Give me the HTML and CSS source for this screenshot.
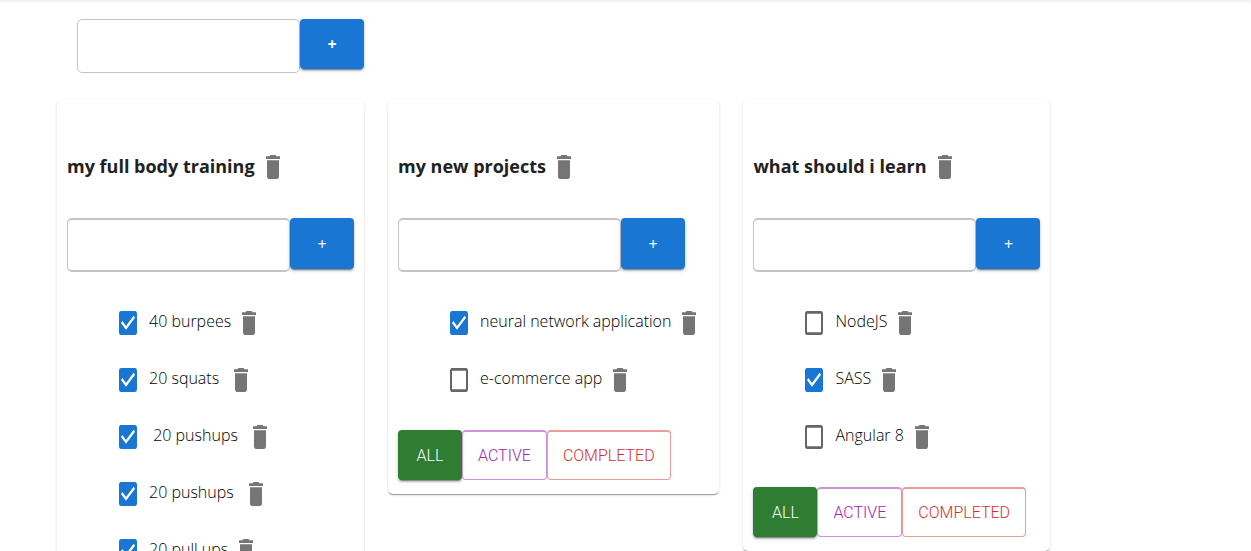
FILE: index.html
```html
<!DOCTYPE html>
<html lang="en">
<head>
<meta charset="utf-8">
<title>Todo lists</title>
<link rel="stylesheet" href="styles.css">
</head>
<body>
<svg class="sprite" aria-hidden="true">
  <symbol id="trash" viewBox="0 0 24 24" preserveAspectRatio="none">
    <path d="M6 19c0 1.100.9 2 2 2h8c1.100 0 2-.9 2-2V7H6v12zM19 4h-3.500l-1-1h-5l-1 1H5v2h14V4z"/>
  </symbol>
</svg>
<div class="topbar"></div>
<main class="page">
  <form class="add-form add-list">
    <input class="field" type="text" aria-label="New list title">
    <button class="add-button" type="button">+</button>
  </form>
  <div class="lists">
    <section class="card">
      <h3 class="title"><span>my full body training</span><button class="icon-button" type="button" aria-label="Delete list"><svg class="icon"><use href="#trash"/></svg></button></h3>
      <form class="add-form">
        <input class="field" type="text" aria-label="New task">
        <button class="add-button" type="button">+</button>
      </form>
      <ul class="tasks">
        <li class="task"><input class="check" type="checkbox" id="a1" checked><label for="a1">40 burpees</label><button class="icon-button" type="button" aria-label="Delete task"><svg class="icon"><use href="#trash"/></svg></button></li>
        <li class="task"><input class="check" type="checkbox" id="a2" checked><label for="a2">20 squats </label><button class="icon-button" type="button" aria-label="Delete task"><svg class="icon"><use href="#trash"/></svg></button></li>
        <li class="task"><input class="check" type="checkbox" id="a3" checked><label for="a3"> 20 pushups </label><button class="icon-button" type="button" aria-label="Delete task"><svg class="icon"><use href="#trash"/></svg></button></li>
        <li class="task"><input class="check" type="checkbox" id="a4" checked><label for="a4">20 pushups </label><button class="icon-button" type="button" aria-label="Delete task"><svg class="icon"><use href="#trash"/></svg></button></li>
        <li class="task"><input class="check" type="checkbox" id="a5" checked><label for="a5">20 pull ups</label><button class="icon-button" type="button" aria-label="Delete task"><svg class="icon"><use href="#trash"/></svg></button></li>
      </ul>
    </section>
    <section class="card">
      <h3 class="title"><span>my new projects</span><button class="icon-button" type="button" aria-label="Delete list"><svg class="icon"><use href="#trash"/></svg></button></h3>
      <form class="add-form">
        <input class="field" type="text" aria-label="New task">
        <button class="add-button" type="button">+</button>
      </form>
      <ul class="tasks">
        <li class="task"><input class="check" type="checkbox" id="b1" checked><label for="b1">neural network application</label><button class="icon-button" type="button" aria-label="Delete task"><svg class="icon"><use href="#trash"/></svg></button></li>
        <li class="task"><input class="check" type="checkbox" id="b2"><label for="b2">e-commerce app</label><button class="icon-button" type="button" aria-label="Delete task"><svg class="icon"><use href="#trash"/></svg></button></li>
      </ul>
      <div class="filters">
        <button class="filter filter-all" type="button">ALL</button>
        <button class="filter filter-active" type="button">ACTIVE</button>
        <button class="filter filter-completed" type="button">COMPLETED</button>
      </div>
    </section>
    <section class="card">
      <h3 class="title"><span>what should i learn</span><button class="icon-button" type="button" aria-label="Delete list"><svg class="icon"><use href="#trash"/></svg></button></h3>
      <form class="add-form">
        <input class="field" type="text" aria-label="New task">
        <button class="add-button" type="button">+</button>
      </form>
      <ul class="tasks">
        <li class="task"><input class="check" type="checkbox" id="c1"><label for="c1">NodeJS</label><button class="icon-button" type="button" aria-label="Delete task"><svg class="icon"><use href="#trash"/></svg></button></li>
        <li class="task"><input class="check" type="checkbox" id="c2" checked><label for="c2">SASS</label><button class="icon-button" type="button" aria-label="Delete task"><svg class="icon"><use href="#trash"/></svg></button></li>
        <li class="task"><input class="check" type="checkbox" id="c3"><label for="c3">Angular 8</label><button class="icon-button" type="button" aria-label="Delete task"><svg class="icon"><use href="#trash"/></svg></button></li>
      </ul>
      <div class="filters">
        <button class="filter filter-all" type="button">ALL</button>
        <button class="filter filter-active" type="button">ACTIVE</button>
        <button class="filter filter-completed" type="button">COMPLETED</button>
      </div>
    </section>
  </div>
</main>
</body>
</html>
```
FILE: styles.css
```css
* {
  box-sizing: border-box;
}

body {
  margin: 0;
  background: #fff;
  color: #212121;
  font-family: "Open Sans", "Noto Sans", sans-serif;
  font-size: 16px;
  line-height: 24px;
}

.sprite {
  display: none;
}

.topbar {
  height: 4px;
  background: linear-gradient(#f0f0f0, #fff);
}

.page {
  padding: 15px 57px 0;
}

.add-form {
  display: flex;
  align-items: flex-start;
}

.add-list {
  padding-left: 20px;
  margin-bottom: 27px;
}

.field {
  width: 223px;
  height: 54px;
  padding: 12px 14px;
  border: 1px solid #c4c4c4;
  border-radius: 5px;
  background: #fff;
  font: inherit;
}

.card .field {
  border-width: 2px 1px;
}

.add-button {
  width: 64px;
  height: 51px;
  padding: 0;
  border: 0;
  border-radius: 4px;
  background: #1976d2;
  box-shadow: 0 3px 1px -2px rgba(0, 0, 0, .3), 0 2px 2px rgba(0, 0, 0, .2), 0 1px 5px rgba(0, 0, 0, .12);
  color: #fff;
  font: 400 16px/24px "Open Sans", sans-serif;
}

.add-list .add-button {
  height: 50px;
  font-weight: 700;
}

.lists {
  display: flex;
  align-items: flex-start;
  gap: 24px;
}

.card {
  padding: 46px 10px 14px;
  border-radius: 5px;
  background: #fff;
  box-shadow: 0 2px 1px -1px rgba(0, 0, 0, .25), 0 1px 1px rgba(0, 0, 0, .14), 0 1px 3px rgba(0, 0, 0, .12);
}

.title {
  display: flex;
  align-items: center;
  height: 42px;
  margin: 0 0 30px;
  font-size: 18px;
  font-weight: 700;
}

.title span,
.task label {
  padding-bottom: 3px;
}

.icon-button {
  display: flex;
  padding: 4px 8px 4px 6px;
  border: 0;
  background: none;
  color: #757575;
}

.icon {
  width: 24px;
  height: 32px;
  fill: currentColor;
}

.tasks {
  margin: 22px 0;
  padding: 0 0 0 40px;
  list-style: none;
}

.task {
  display: flex;
  align-items: center;
  height: 57px;
  font-weight: 300;
  color: #000;
  white-space: pre;
}

.check {
  appearance: none;
  width: 24px;
  height: 32px;
  margin: 0 9px;
  background: url("data:image/svg+xml,%3Csvg xmlns='http://www.w3.org/2000/svg' viewBox='0 0 24 24' preserveAspectRatio='none'%3E%3Cpath fill='%23666' d='M19 5v14H5V5h14m0-2H5c-1.100 0-2 .9-2 2v14c0 1.100.9 2 2 2h14c1.100 0 2-.9 2-2V5c0-1.100-.9-2-2-2z'/%3E%3C/svg%3E") center / 24px 32px no-repeat;
}

.check:checked {
  background-image: url("data:image/svg+xml,%3Csvg xmlns='http://www.w3.org/2000/svg' viewBox='0 0 24 24' preserveAspectRatio='none'%3E%3Cpath fill='%231976d2' d='M19 3H5c-1.110 0-2 .9-2 2v14c0 1.100.89 2 2 2h14c1.110 0 2-.9 2-2V5c0-1.100-.89-2-2-2zm-9 14l-5-5 1.410-1.410L10 14.170l7.590-7.590L19 8l-9 9z'/%3E%3C/svg%3E");
}

.filters {
  display: flex;
}

.filter {
  height: 50px;
  padding: 0 15px;
  border: 1px solid;
  border-top-width: 2px;
  border-radius: 4px;
  background: #fff;
  font: 300 16px/24px Roboto, sans-serif;
}

.filter-all {
  min-width: 64px;
  border-color: #2e7d32;
  background: #2e7d32;
  box-shadow: 0 3px 1px -2px rgba(0, 0, 0, .3), 0 2px 2px rgba(0, 0, 0, .2), 0 1px 5px rgba(0, 0, 0, .12);
  color: #fff;
}

.filter-active {
  border-color: #ce93d8;
  color: #9c27b0;
}

.filter-completed {
  border-color: #ef9a9a;
  color: #d32f2f;
}
```
